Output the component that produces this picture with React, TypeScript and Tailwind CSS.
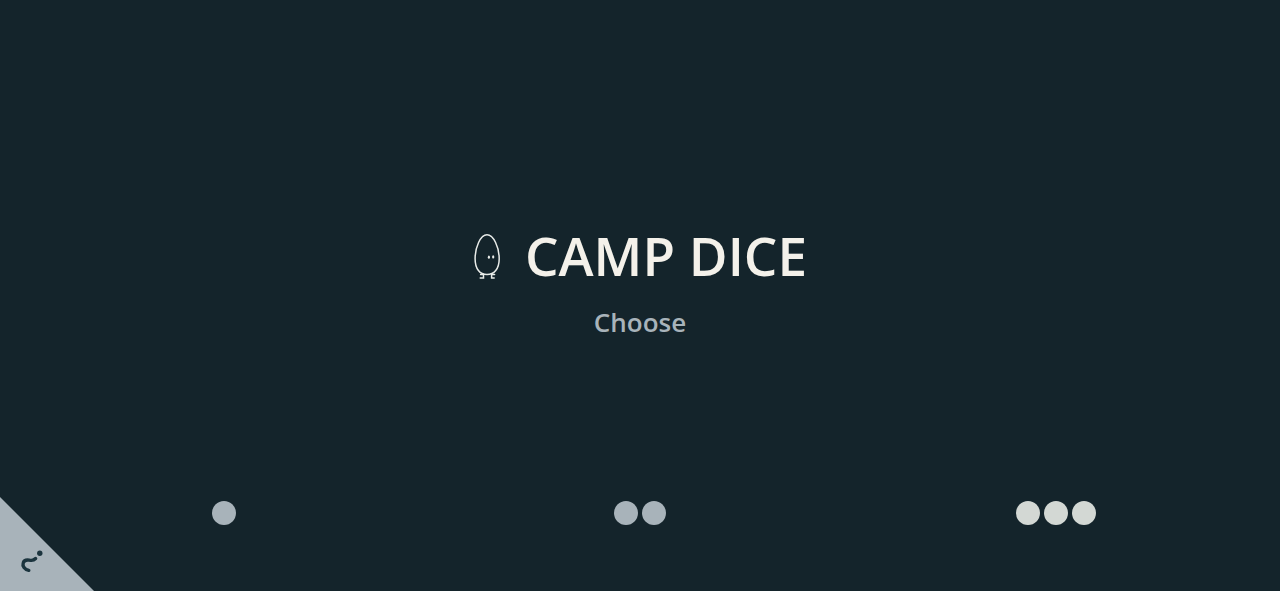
import React, { useState } from "react";

const choices = [
  { count: 1, label: "One die", color: "bg-[#a8b3ba]" },
  { count: 2, label: "Two dice", color: "bg-[#a8b3ba]" },
  { count: 3, label: "Three dice", color: "bg-[#d3d8d4]" },
];

function EggIcon() {
  return (
    <svg
      viewBox="0 0 28 48"
      className="h-12 w-7"
      fill="none"
      stroke="#e8ebe8"
      strokeWidth="1.5"
      strokeLinecap="round"
      aria-hidden="true"
    >
      <path d="M14 2.8C7.4 2.8 2.1 15.4 2.1 26.7C2.1 37 7 42.6 14 42.6S26.2 37 26.2 26.7C26.2 15.4 20.6 2.8 14 2.8Z" />
      <path d="M10.5 42.6V46H7.2M7.6 42.4H10.4M18.6 42.6V46H21.2M18.8 42.4H21.6" />
      <ellipse cx="15.9" cy="25.2" rx="1.1" ry="1.6" fill="#e8ebe8" stroke="none" />
      <ellipse cx="20.2" cy="24.9" rx="1.1" ry="1.6" fill="#e8ebe8" stroke="none" />
    </svg>
  );
}

function HelpCorner() {
  return (
    <button
      type="button"
      aria-label="Help"
      className="absolute bottom-0 left-0 h-[94px] w-[94px] cursor-pointer bg-[#a8b3ba] [clip-path:polygon(0_0,100%_100%,0_100%)]"
    >
      <svg viewBox="0 0 94 94" className="h-full w-full" fill="none" aria-hidden="true">
        <path
          d="M28.8 73.4C24.6 72.6 22.2 69 23.2 66C24.6 61.4 28.4 63.3 31 63.4C33.2 63.5 34.6 62.6 35.6 61.5"
          stroke="#1b343e"
          strokeWidth="3.4"
          strokeLinecap="round"
        />
        <circle cx="39.8" cy="56.2" r="2.7" fill="#1b343e" />
      </svg>
    </button>
  );
}

export default function App() {
  const [, setDice] = useState(0);

  return (
    <div className="relative flex min-h-screen flex-col bg-[#14242b] font-['Open_Sans',sans-serif] font-semibold">
      <main className="flex flex-1 flex-col items-center justify-center gap-4 pt-[122px]">
        <h1 className="flex items-center gap-6 text-[53px] leading-[64px] text-[#f4f1ea]">
          <EggIcon />
          CAMP DICE
        </h1>
        <p className="text-[26px] leading-9 text-[#a8b3ba]">Choose</p>
      </main>

      <div className="grid grid-cols-3 px-4 pb-1.5">
        {choices.map((choice) => (
          <button
            key={choice.count}
            type="button"
            aria-label={choice.label}
            onClick={() => setDice(choice.count)}
            className="flex h-36 cursor-pointer items-center justify-center gap-1"
          >
            {Array.from({ length: choice.count }, (_, i) => (
              <span key={i} className={`h-6 w-6 rounded-full ${choice.color}`} />
            ))}
          </button>
        ))}
      </div>

      <HelpCorner />
    </div>
  );
}
